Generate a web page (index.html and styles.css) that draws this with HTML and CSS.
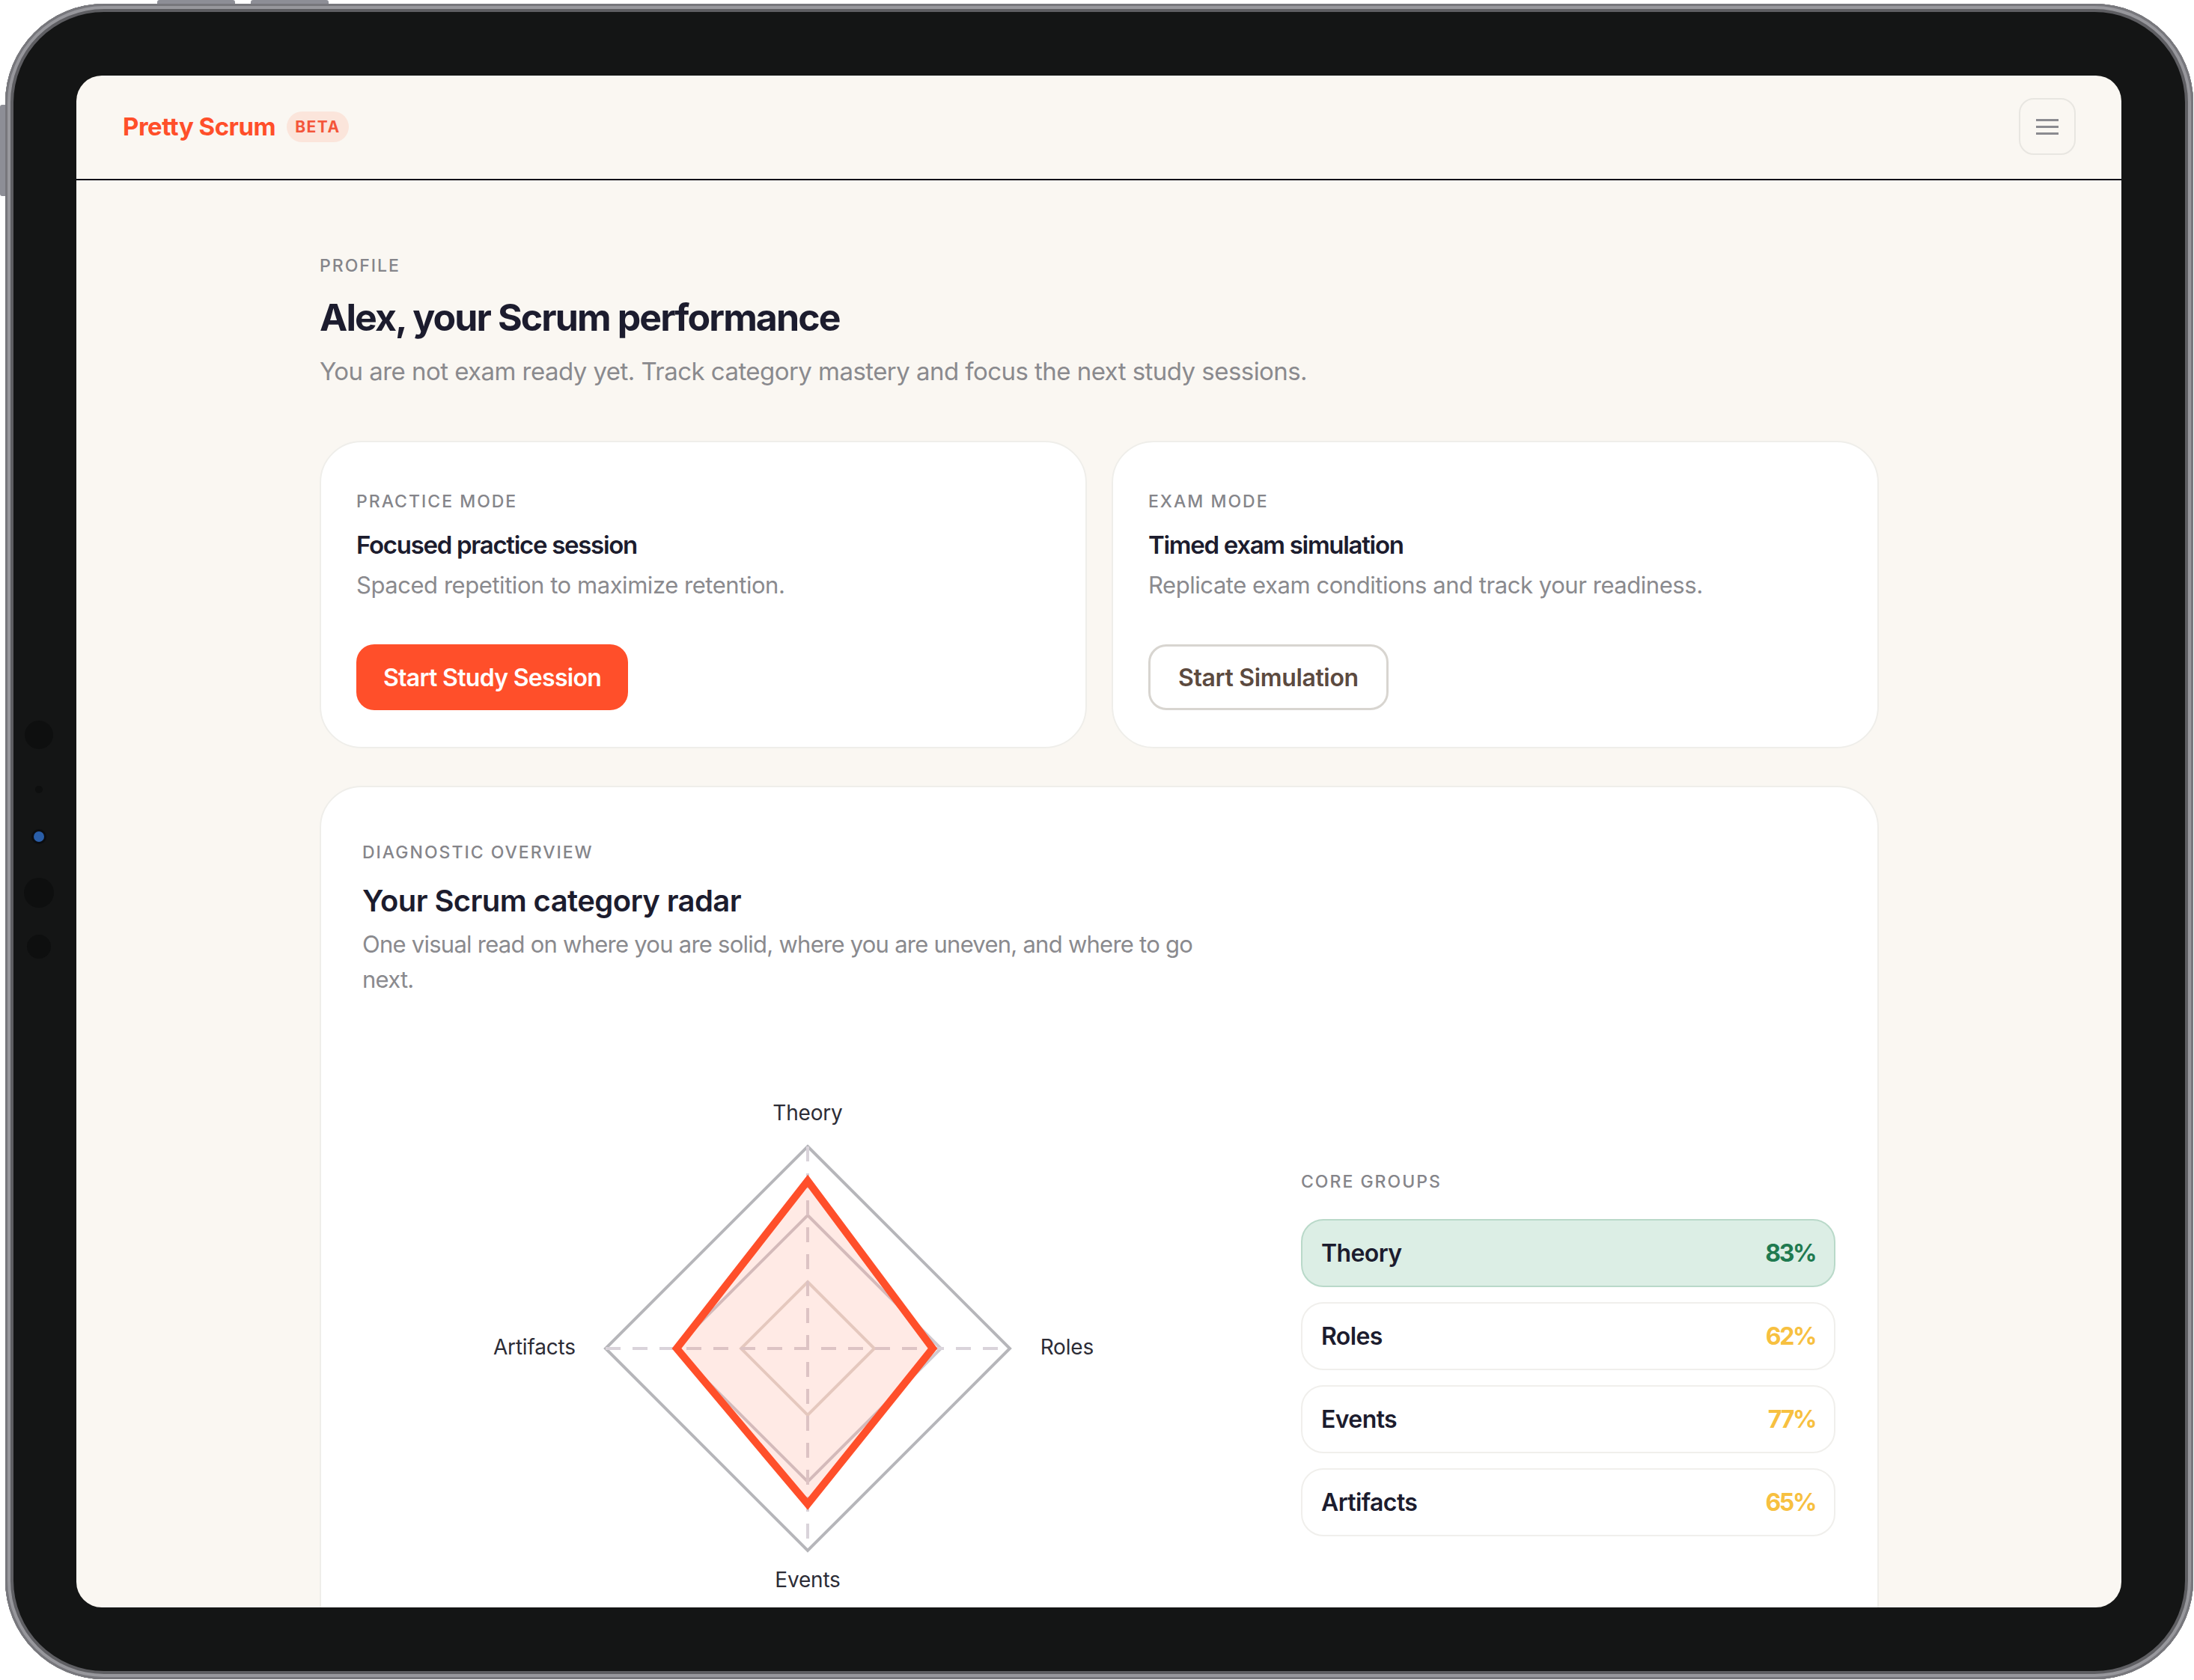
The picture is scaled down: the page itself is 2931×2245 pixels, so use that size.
FILE: index.html
```html
<!DOCTYPE html>
<html lang="en">
<head>
  <meta charset="UTF-8" />
  <title>Pretty Scrum</title>
  <link rel="stylesheet" href="styles.css">
</head>
<body>
  <div class="device">
    <span class="side-btn top-a"></span>
    <span class="side-btn top-b"></span>
    <span class="side-btn left-a"></span>
    <span class="lens lens-a"></span>
    <span class="lens lens-b"></span>
    <span class="lens lens-c"></span>
    <span class="lens lens-d"></span>
    <span class="lens lens-e"></span>

    <div class="screen">
      <header class="topbar">
        <div class="brand">
          <span class="brand-name">Pretty Scrum</span>
          <span class="beta">BETA</span>
        </div>
        <button class="menu-btn" aria-label="Menu">
          <span></span><span></span><span></span>
        </button>
      </header>

      <main class="content">
        <div class="eyebrow">PROFILE</div>
        <h1>Alex, your Scrum performance</h1>
        <p class="lead">You are not exam ready yet. Track category mastery and focus the next study sessions.</p>

        <div class="modes">
          <section class="card mode">
            <div class="eyebrow">PRACTICE MODE</div>
            <h2>Focused practice session</h2>
            <p>Spaced repetition to maximize retention.</p>
            <button class="btn primary">Start Study Session</button>
          </section>
          <section class="card mode">
            <div class="eyebrow">EXAM MODE</div>
            <h2>Timed exam simulation</h2>
            <p>Replicate exam conditions and track your readiness.</p>
            <button class="btn outline">Start Simulation</button>
          </section>
        </div>

        <section class="card diagnostic">
          <div class="eyebrow">DIAGNOSTIC OVERVIEW</div>
          <h2>Your Scrum category radar</h2>
          <p>One visual read on where you are solid, where you are uneven, and where to go next.</p>

          <div class="diag-body">
            <svg class="radar" width="842" height="700" viewBox="0 0 842 700">
              <polygon class="ring" points="420,80 690,350 420,620 150,350" />
              <polygon class="ring mid" points="420,172 598,350 420,528 242,350" />
              <polygon class="ring low" points="420,261 509,350 420,439 331,350" />
              <line class="axis" x1="420" y1="80" x2="420" y2="620" />
              <line class="axis" x1="150" y1="350" x2="690" y2="350" />
              <polygon class="score" points="420,126 587,350 420,558 245,350" />
              <text x="420" y="45" text-anchor="middle">Theory</text>
              <text x="802" y="358" text-anchor="end">Roles</text>
              <text x="420" y="669" text-anchor="middle">Events</text>
              <text x="0" y="358">Artifacts</text>
            </svg>

            <div class="groups">
              <div class="eyebrow">CORE GROUPS</div>
              <div class="group good"><span>Theory</span><b>83%</b></div>
              <div class="group"><span>Roles</span><b>62%</b></div>
              <div class="group"><span>Events</span><b>77%</b></div>
              <div class="group"><span>Artifacts</span><b>65%</b></div>
            </div>
          </div>
        </section>
      </main>
    </div>
  </div>
</body>
</html>
```

FILE: styles.css
```css
html, body {
  margin: 0;
  height: 2245px;
  overflow: hidden;
  background: #fff;
}

body {
  padding: 5px 1px 1px 7px;
  box-sizing: border-box;
  font-family: "Inter", "Liberation Sans", sans-serif;
  color: #1c1c2e;
}

.device {
  position: relative;
  height: 2239px;
  box-sizing: border-box;
  padding: 96px 96px 96px 95px;
  background: #141515;
  border-radius: 132px;
  box-shadow: inset 0 0 0 3px #77777c, inset 0 0 0 7px #97979c, inset 0 0 0 11px #5e5e62;
}

/* hardware bits */
.side-btn {
  position: absolute;
  background: #8d8e96;
}
.top-a, .top-b {
  top: -5px;
  width: 104px;
  height: 5px;
  border-radius: 3px 3px 0 0;
}
.top-a { left: 203px; }
.top-b { left: 328px; }
.left-a {
  left: -7px;
  top: 135px;
  width: 7px;
  height: 122px;
  border-radius: 3px 0 0 3px;
}

.lens {
  position: absolute;
  border-radius: 50%;
  background: #0e0f0f;
  transform: translate(-50%, -50%);
  left: 45px;
}
.lens-a { top: 977px; width: 38px; height: 38px; }
.lens-b { top: 1050px; width: 10px; height: 10px; }
.lens-c {
  top: 1113px;
  width: 14px;
  height: 14px;
  background: #2a5ea8;
  box-shadow: 0 0 0 3px #0c0d10;
}
.lens-d { top: 1188px; width: 40px; height: 40px; }
.lens-e { top: 1260px; width: 32px; height: 32px; }

.screen {
  height: 2047px;
  overflow: hidden;
  background: #faf7f2;
  border-radius: 34px;
}

.topbar {
  height: 138px;
  display: flex;
  align-items: center;
  justify-content: space-between;
  padding: 0 61px 0 62px;
  border-bottom: 2px solid #0f0f18;
}

.brand {
  display: flex;
  align-items: center;
  gap: 15px;
  margin-bottom: 2px;
}

.brand-name {
  font-size: 33px;
  font-weight: 700;
  letter-spacing: -0.5px;
  color: #ff4f2a;
}

.beta {
  padding: 0 11px;
  line-height: 41px;
  font-size: 21px;
  font-weight: 700;
  letter-spacing: 1.5px;
  color: #f4563a;
  background: #fbe5db;
  border-radius: 21px;
}

.menu-btn {
  width: 76px;
  height: 76px;
  padding: 0;
  margin-bottom: 2px;
  display: flex;
  flex-direction: column;
  align-items: center;
  justify-content: center;
  gap: 6px;
  background: none;
  border: 2px solid #e8e6e1;
  border-radius: 20px;
}

.menu-btn span {
  width: 30px;
  height: 3px;
  background: #8b8b90;
}

.content {
  padding: 100px 324px 0 325px;
}

.eyebrow {
  font-size: 23px;
  line-height: 28px;
  font-weight: 500;
  letter-spacing: 2px;
  color: #85858a;
}

h1 {
  margin: 25px 0 0;
  font-size: 50px;
  line-height: 60px;
  font-weight: 700;
  letter-spacing: -1.9px;
}

.lead {
  margin: 20px 0 0;
  font-size: 33px;
  line-height: 44px;
  letter-spacing: -0.55px;
  color: #8a8a8e;
}

.modes {
  display: grid;
  grid-template-columns: 1fr 1fr;
  gap: 33px;
  margin-top: 71px;
}

.card {
  background: #fff;
  border: 2px solid #efeeea;
  border-radius: 56px;
}

.mode {
  height: 411px;
  box-sizing: border-box;
  padding: 65px 47px 0;
}

h2 {
  margin: 0;
  font-weight: 600;
}

.mode h2 {
  margin-top: 22px;
  font-size: 33px;
  line-height: 44px;
  letter-spacing: -1.3px;
}

.card p {
  margin: 0;
  color: #8a8a8e;
}

.mode p {
  margin-top: 10px;
  font-size: 31px;
  line-height: 44px;
  letter-spacing: -0.45px;
}

.btn {
  display: block;
  margin-top: 57px;
  height: 88px;
  padding: 0 36px;
  font-family: inherit;
  font-size: 32px;
  font-weight: 600;
  letter-spacing: -0.7px;
  border-radius: 24px;
}

.primary {
  background: #ff4f2a;
  border: none;
  color: #fff;
}

.outline {
  padding: 0 37px;
  background: #fff;
  border: 3px solid #d8d5d0;
  color: #5c4a3f;
  letter-spacing: -0.35px;
}

.diagnostic {
  margin-top: 50px;
  padding: 73px 55px 0;
  height: 1200px;
  box-sizing: border-box;
}

.diagnostic h2 {
  margin-top: 23px;
  font-size: 40px;
  line-height: 56px;
  letter-spacing: -0.6px;
}

.diagnostic p {
  margin-top: 6px;
  max-width: 1130px;
  font-size: 31px;
  line-height: 47px;
  letter-spacing: -0.75px;
}

.diag-body {
  display: flex;
  align-items: flex-start;
  margin-top: 120px;
  padding-left: 175px;
}

.radar text {
  font-size: 28px;
  letter-spacing: -0.2px;
  fill: #2c2c36;
}

.ring {
  fill: none;
  stroke: #b6b6ba;
  stroke-width: 4;
}
.ring.mid { stroke: #cfc9cf; }
.ring.low { stroke: #e2d9d3; }

.axis {
  stroke: #d9d3da;
  stroke-width: 4;
  stroke-dasharray: 20 16;
}

.score {
  fill: rgba(255, 79, 42, 0.12);
  stroke: #ff4f2a;
  stroke-width: 10;
}

.groups {
  margin: 113px 0 0 237px;
  width: 714px;
  flex-shrink: 0;
  display: flex;
  flex-direction: column;
  gap: 20px;
}

.groups .eyebrow {
  margin-bottom: 16px;
}

.group {
  height: 91px;
  box-sizing: border-box;
  display: flex;
  align-items: center;
  justify-content: space-between;
  padding: 0 25px;
  border: 2px solid #f0efec;
  border-radius: 30px;
  font-size: 32px;
  font-weight: 600;
  letter-spacing: -0.6px;
}

.group b {
  font-size: 32px;
  font-weight: 700;
  letter-spacing: -2.4px;
  color: #f7c040;
}

.group.good {
  background: #dceee5;
  border-color: #b9d9c9;
}

.group.good b {
  color: #1f7a50;
}
```
